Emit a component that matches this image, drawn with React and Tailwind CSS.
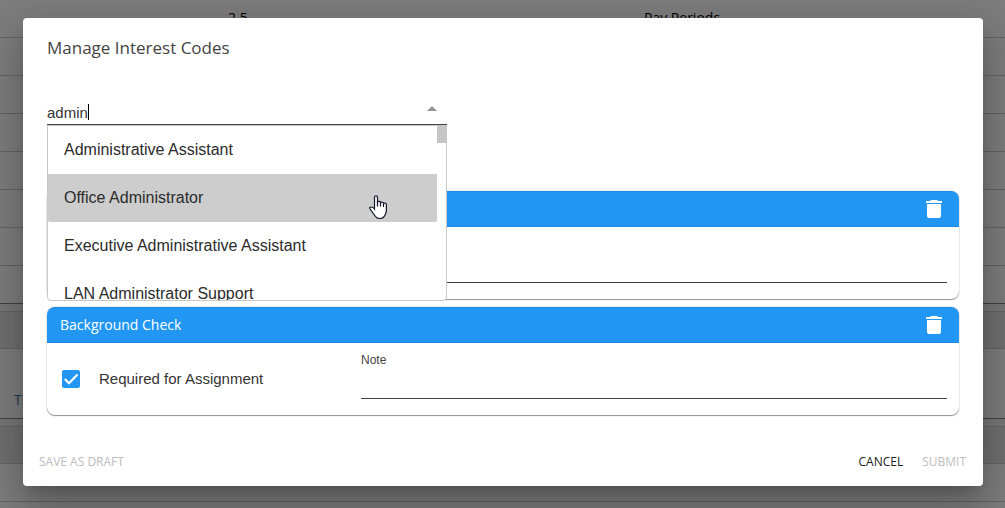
import React, { useState } from 'react';

const CODES = [
  'Administrative Assistant',
  'Office Administrator',
  'Executive Administrative Assistant',
  'LAN Administrator Support',
];

const TrashIcon = () => (
  <svg viewBox="0 0 24 24" className="w-6 h-6" fill="currentColor" aria-hidden="true">
    <path d="M5 19c0 1.100.9 2 2 2h10c1.100 0 2-.9 2-2V7H5v12zM20 4h-4l-1-1H9L8 4H4v2h16V4z" />
  </svg>
);

const HandCursor = () => (
  <svg viewBox="0 0 18 24" className="w-[18px] h-6" aria-hidden="true">
    <path
      d="M5.500 14V2.300C5.500 .3 8.500 .3 8.500 2.300V6.800C9.500 6 11.400 6.400 11.500 7.500C12.600 6.800 14.300 7.200 14.500 8.300C15.800 7.700 17.400 8.400 17.400 9.800V15.500C17.400 18 16.300 19 15.800 20.500C14.500 24.300 8.300 24.300 6.500 21.500C5 19.500 3.500 17.500 2.200 15.500C1.200 14 .2 13.200 .8 12.500C2 11.400 4.300 12.300 5.500 14Z"
      fill="#fff"
      stroke="#15152b"
      strokeWidth="1.200"
    />
    <path d="M8.500 6.500V11.500M11.500 7.500V11.500M14.500 8.300V12" stroke="#15152b" strokeWidth="1.200" fill="none" />
  </svg>
);

const PageRow = ({ children }) => (
  <div className="h-[38px] border-b border-[#c9c9c9]">{children}</div>
);

const BackgroundPage = () => (
  <div className="absolute inset-0 overflow-hidden bg-[#fafafa] font-['Open_Sans',sans-serif] text-sm text-black" aria-hidden="true">
    <div className="grid grid-cols-[228px_416px_1fr] items-center h-[38px] border-b border-[#c9c9c9] pb-[2px]">
      <span />
      <span>2.5</span>
      <span>Pay Periods</span>
    </div>
    <PageRow />
    <PageRow />
    <PageRow />
    <PageRow />
    <PageRow />
    <PageRow />
    <div className="h-[38px] border-b border-[#808080]" />
    <div className="h-2 border-b border-[#c9c9c9] bg-[#eeeeee]" />
    <div className="h-[37px] border-b border-[#c9c9c9] bg-[#e0e0e0]" />
    <div className="flex items-end h-[70px] border-b border-[#808080] px-[14px] pb-2 text-[#3b76a0]">Title</div>
    <div className="h-2 border-b border-[#c9c9c9] bg-[#eeeeee]" />
    <div className="h-[37px] border-b border-[#c9c9c9] bg-[#e0e0e0]" />
    <PageRow />
    <PageRow />
  </div>
);

const CodeCard = ({ id, title, required, onToggle }) => (
  <section className="rounded-lg bg-white shadow-[0_1px_1px_rgba(0,0,0,0.4),0_0_2px_rgba(0,0,0,0.2)]">
    <header className="flex items-center h-9 rounded-t-lg border-y border-[#1e88e5] bg-[#2196f3] px-[13px] text-white">
      {title && <h3 className="font-['Open_Sans',sans-serif] text-sm font-medium">{title}</h3>}
      <button type="button" aria-label="Remove code" className="ml-auto">
        <TrashIcon />
      </button>
    </header>
    <div className="flex h-[72px] pr-3">
      <label className="flex flex-1 items-center gap-[19px] pl-[15px] text-[15px] text-[#333]">
        <span className="relative w-[18px] h-[18px]">
          <input
            type="checkbox"
            checked={required}
            onChange={onToggle}
            className="block w-[18px] h-[18px] appearance-none rounded-xs border-2 border-[#757575] checked:border-[#2196f3] checked:bg-[#2196f3] peer"
          />
          <svg viewBox="0 0 18 18" className="absolute inset-0 hidden pointer-events-none peer-checked:block" aria-hidden="true">
            <path d="M2.800 9L7 13.200L15.500 4.600" fill="none" stroke="#fff" strokeWidth="2.200" />
          </svg>
        </span>
        {title && 'Required for Assignment'}
      </label>
      <div className="flex flex-col w-[586px] pt-2">
        <label htmlFor={id} className="text-xs leading-[18px] text-[#444]">{title && 'Note'}</label>
        <input id={id} type="text" className="h-[30px] mt-auto mb-4 border-b border-[#424242] text-[15px] outline-none" />
      </div>
    </div>
  </section>
);

const App = () => {
  const [search, setSearch] = useState('admin');
  const [active, setActive] = useState(1);
  const [required, setRequired] = useState({ first: true, background: true });

  const toggle = (name) => setRequired({ ...required, [name]: !required[name] });

  return (
    <div className="relative min-h-screen font-['Liberation_Sans',Arial,sans-serif]">
      <BackgroundPage />
      <div className="relative min-h-screen bg-black/50 pt-[18px] pr-[22px] pb-[22px] pl-[23px]">
        <div
          role="dialog"
          aria-labelledby="dialog-title"
          className="rounded bg-white shadow-[0_11px_15px_-7px_rgba(0,0,0,0.2),0_24px_38px_3px_rgba(0,0,0,0.14),0_9px_46px_8px_rgba(0,0,0,0.12)]"
        >
          <h2 id="dialog-title" className="px-6 pt-[18px] font-['Open_Sans',sans-serif] text-[17px] leading-6 text-[#444]">
            Manage Interest Codes
          </h2>

          <div className="px-6 pt-10">
            <div className="relative w-[400px] mb-[66px]">
              <div className="flex items-center h-[25px] border-b border-[#424242]">
                <input
                  type="text"
                  role="combobox"
                  aria-label="Interest code"
                  aria-expanded="true"
                  aria-controls="code-list"
                  value={search}
                  onChange={(e) => setSearch(e.target.value)}
                  className="[field-sizing:content] pt-[2px] text-[15px] leading-[22px] text-[#333] outline-none"
                />
                <span className="w-px h-4 bg-black" />
                <svg viewBox="0 0 10 5" className="w-[10px] h-[5px] ml-auto mr-[10px] mb-2" aria-hidden="true">
                  <path d="M0 5L5 0L10 5Z" fill="#949494" />
                </svg>
              </div>

              <div className="absolute top-full inset-x-0 z-10 flex h-44 overflow-hidden rounded-b-sm border border-[#c8c8c8] bg-white">
                <ul id="code-list" role="listbox" className="flex-1">
                  {CODES.map((code, index) => (
                    <li
                      key={code}
                      role="option"
                      aria-selected={index === active}
                      onMouseEnter={() => setActive(index)}
                      className={`flex items-center h-12 px-4 text-base text-[#2b2b2b] ${index === active ? 'rounded-b-xs bg-[#cdcdcd]' : ''}`}
                    >
                      {code}
                    </li>
                  ))}
                </ul>
                <div className="w-[9px]">
                  <div className="h-[17px] bg-[#c6c6c6]" />
                </div>
                <div className="absolute left-[321px] top-[69px] pointer-events-none">
                  <HandCursor />
                </div>
              </div>
            </div>

            <div className="flex flex-col gap-2">
              <CodeCard id="note-first" required={required.first} onToggle={() => toggle('first')} />
              <CodeCard id="note-background" title="Background Check" required={required.background} onToggle={() => toggle('background')} />
            </div>
          </div>

          <footer className="flex items-center gap-[19px] pt-[37px] pr-[17px] pb-[14px] pl-4 font-['Open_Sans',sans-serif] text-xs leading-5">
            <button type="button" disabled className="mr-auto text-[#bdbdbd]">SAVE AS DRAFT</button>
            <button type="button" className="text-[#212121]">CANCEL</button>
            <button type="button" disabled className="text-[#bdbdbd]">SUBMIT</button>
          </footer>
        </div>
      </div>
    </div>
  );
};

export default App;
